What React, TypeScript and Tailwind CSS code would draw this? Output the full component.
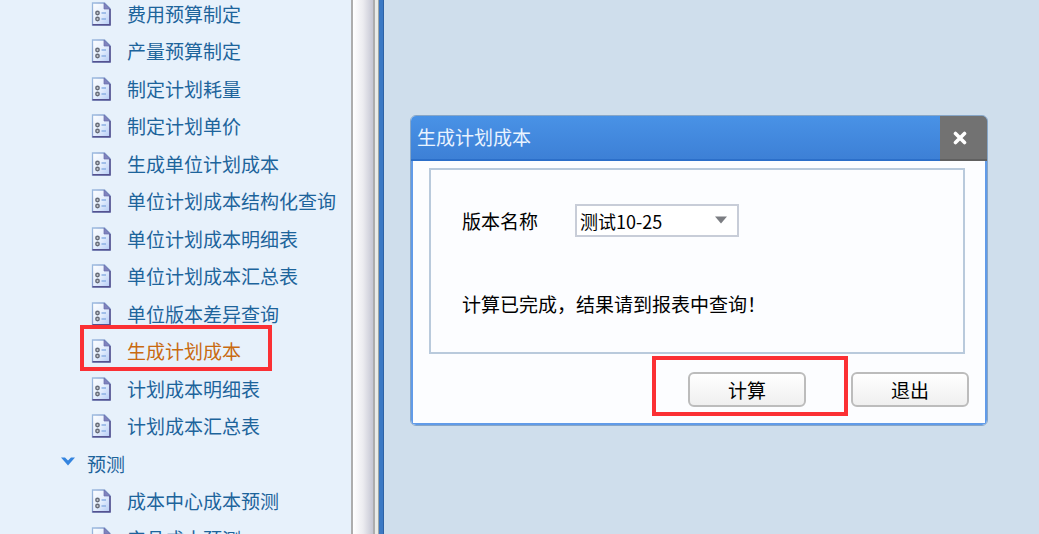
import { useState } from "react";

type Item = { label: string; kind?: "group" | "active" };

const items: Item[] = [
  { label: "费用预算制定" },
  { label: "产量预算制定" },
  { label: "制定计划耗量" },
  { label: "制定计划单价" },
  { label: "生成单位计划成本" },
  { label: "单位计划成本结构化查询" },
  { label: "单位计划成本明细表" },
  { label: "单位计划成本汇总表" },
  { label: "单位版本差异查询" },
  { label: "生成计划成本", kind: "active" },
  { label: "计划成本明细表" },
  { label: "计划成本汇总表" },
  { label: "预测", kind: "group" },
  { label: "成本中心成本预测" },
  { label: "产品成本预测" },
];

function DocIcon() {
  return (
    <svg width="20" height="24" viewBox="0 0 20 24" className="shrink-0" aria-hidden="true">
      <defs>
        <linearGradient id="page" x1="0" y1="0" x2="1" y2="1">
          <stop offset="0" stopColor="#fdfeff" />
          <stop offset="0.5" stopColor="#e6effd" />
          <stop offset="1" stopColor="#b4cbf5" />
        </linearGradient>
        <linearGradient id="edge" x1="0" y1="0" x2="1" y2="1">
          <stop offset="0" stopColor="#9dbbe0" />
          <stop offset="1" stopColor="#6f7fb8" />
        </linearGradient>
      </defs>
      <path d="M1.5 1H13.5L19 6.5V23H1.5Z" fill="url(#page)" stroke="url(#edge)" strokeWidth="1.3" />
      <path d="M13 1L19 7H13Z" fill="#8083bd" stroke="#6c6fac" strokeWidth="0.7" />
      <path d="M1.5 22.8H19V7" fill="none" stroke="#55528f" strokeWidth="1.5" />
      <g fill="#c6cad2" stroke="#666b78" strokeWidth="1.4">
        <circle cx="6.5" cy="11" r="1.7" />
        <circle cx="6.5" cy="17" r="1.7" />
      </g>
      <path d="M10.5 11H15M10.5 17H15" stroke="#8cb0e4" strokeWidth="1.6" />
    </svg>
  );
}

function Sidebar() {
  return (
    <nav className="w-[351px] shrink-0 overflow-hidden bg-[#e7f1fb]">
      <ul className="-mt-[5px]">
        {items.map((item) => (
          <li key={item.label} className="relative flex h-[38px] items-center odd:h-[37px]">
            {item.kind === "group" ? (
              <a href="#" className="flex items-center gap-3 pl-[61px] text-[#1d649b]">
                <svg width="14" height="10" viewBox="0 0 14 10" className="-mt-1" aria-hidden="true">
                  <path d="M0 0.5H4L7 3.5L10 0.5H14L7 8.5Z" fill="#3484df" />
                </svg>
                {item.label}
              </a>
            ) : (
              <a
                href="#"
                className={
                  item.kind === "active"
                    ? "flex items-center gap-4 pl-[91px] text-[#c96a10]"
                    : "flex items-center gap-4 pl-[91px] text-[#1d649b]"
                }
              >
                <DocIcon />
                {item.label}
              </a>
            )}
            {item.kind === "active" && (
              <span className="pointer-events-none absolute -top-[7px] -bottom-px left-20 w-48 border-4 border-[#fb3034]" />
            )}
          </li>
        ))}
      </ul>
    </nav>
  );
}

function Splitter() {
  return (
    <div className="flex shrink-0">
      <div className="w-6 border-x-2 border-[#adadad] bg-linear-to-r from-white via-[#ececf0] to-[#c5c6d3]" />
      <div className="w-1 border-r border-[#a0a7a5] bg-[#e9ebe8]" />
      <div className="w-[5px] border-r border-[#2e62a5] bg-[#3c79c4]" />
    </div>
  );
}

const buttonClass =
  "h-[35px] w-[118px] rounded-md border-2 border-[#bcbcbc] bg-linear-to-b from-white to-[#efefef] text-black";

function CostDialog() {
  const [version, setVersion] = useState("测试10-25");
  return (
    <section
      role="dialog"
      aria-labelledby="dialog-title"
      className="mt-[115px] mr-[51px] ml-[26px] flex-1 self-start overflow-hidden rounded-md border border-[#87a6c7] bg-[#fcfdff]"
    >
      <header className="flex h-[45px] border-b-2 border-[#2c6fc9] bg-linear-to-b from-[#4992e6] to-[#3d80d6]">
        <h1 id="dialog-title" className="-mt-px flex-1 self-center pl-1.5 text-[#e9f3ff]">
          生成计划成本
        </h1>
        <button
          type="button"
          aria-label="关闭"
          className="-mb-0.5 flex w-[47px] items-center justify-center border-b-2 border-[#606060] bg-[#727272] pr-2"
        >
          <svg width="14" height="14" viewBox="0 0 14 14" aria-hidden="true">
            <path d="M2.5 2.5L11.5 11.5M11.5 2.5L2.5 11.5" stroke="#fff" strokeWidth="3.6" strokeLinecap="round" />
          </svg>
        </button>
      </header>
      <div className="border-x-2 border-b-2 border-[#619be8] px-4 pt-[7px] pb-4">
        <div className="mr-1 border-2 border-[#b9cadc] px-[31px] pt-[34px] pb-[34px]">
          <div className="flex items-center">
            <label htmlFor="version" className="w-[113px]">
              版本名称
            </label>
            <div className="relative w-[164px]">
              <select
                id="version"
                value={version}
                onChange={(e) => setVersion(e.target.value)}
                className="h-[33px] w-full appearance-none border-2 border-[#c8cdd8] bg-white pl-[3px] text-lg leading-6 text-black"
              >
                <option>测试10-25</option>
              </select>
              <svg
                width="12"
                height="8"
                viewBox="0 0 12 8"
                className="pointer-events-none absolute top-3 right-3"
                aria-hidden="true"
              >
                <path d="M0 0.5H12L6 7.5Z" fill="#7b7d82" />
              </svg>
            </div>
          </div>
          <p className="mt-[53px]">计算已完成，结果请到报表中查询！</p>
        </div>
        <footer className="mt-[18px] flex justify-end gap-[45px]">
          <div className="relative">
            <button type="button" className={buttonClass}>
              计算
            </button>
            <span className="pointer-events-none absolute -top-4 -right-[42px] -bottom-[9px] -left-9 border-4 border-[#fb3034]" />
          </div>
          <button type="button" className={buttonClass}>
            退出
          </button>
        </footer>
      </div>
    </section>
  );
}

export default function App() {
  return (
    <div className="flex h-screen overflow-hidden bg-[#cfdeec] font-['Noto_Sans_CJK_SC',sans-serif] text-[19px] leading-7 text-black">
      <Sidebar />
      <Splitter />
      <main className="flex flex-1">
        <CostDialog />
      </main>
    </div>
  );
}
